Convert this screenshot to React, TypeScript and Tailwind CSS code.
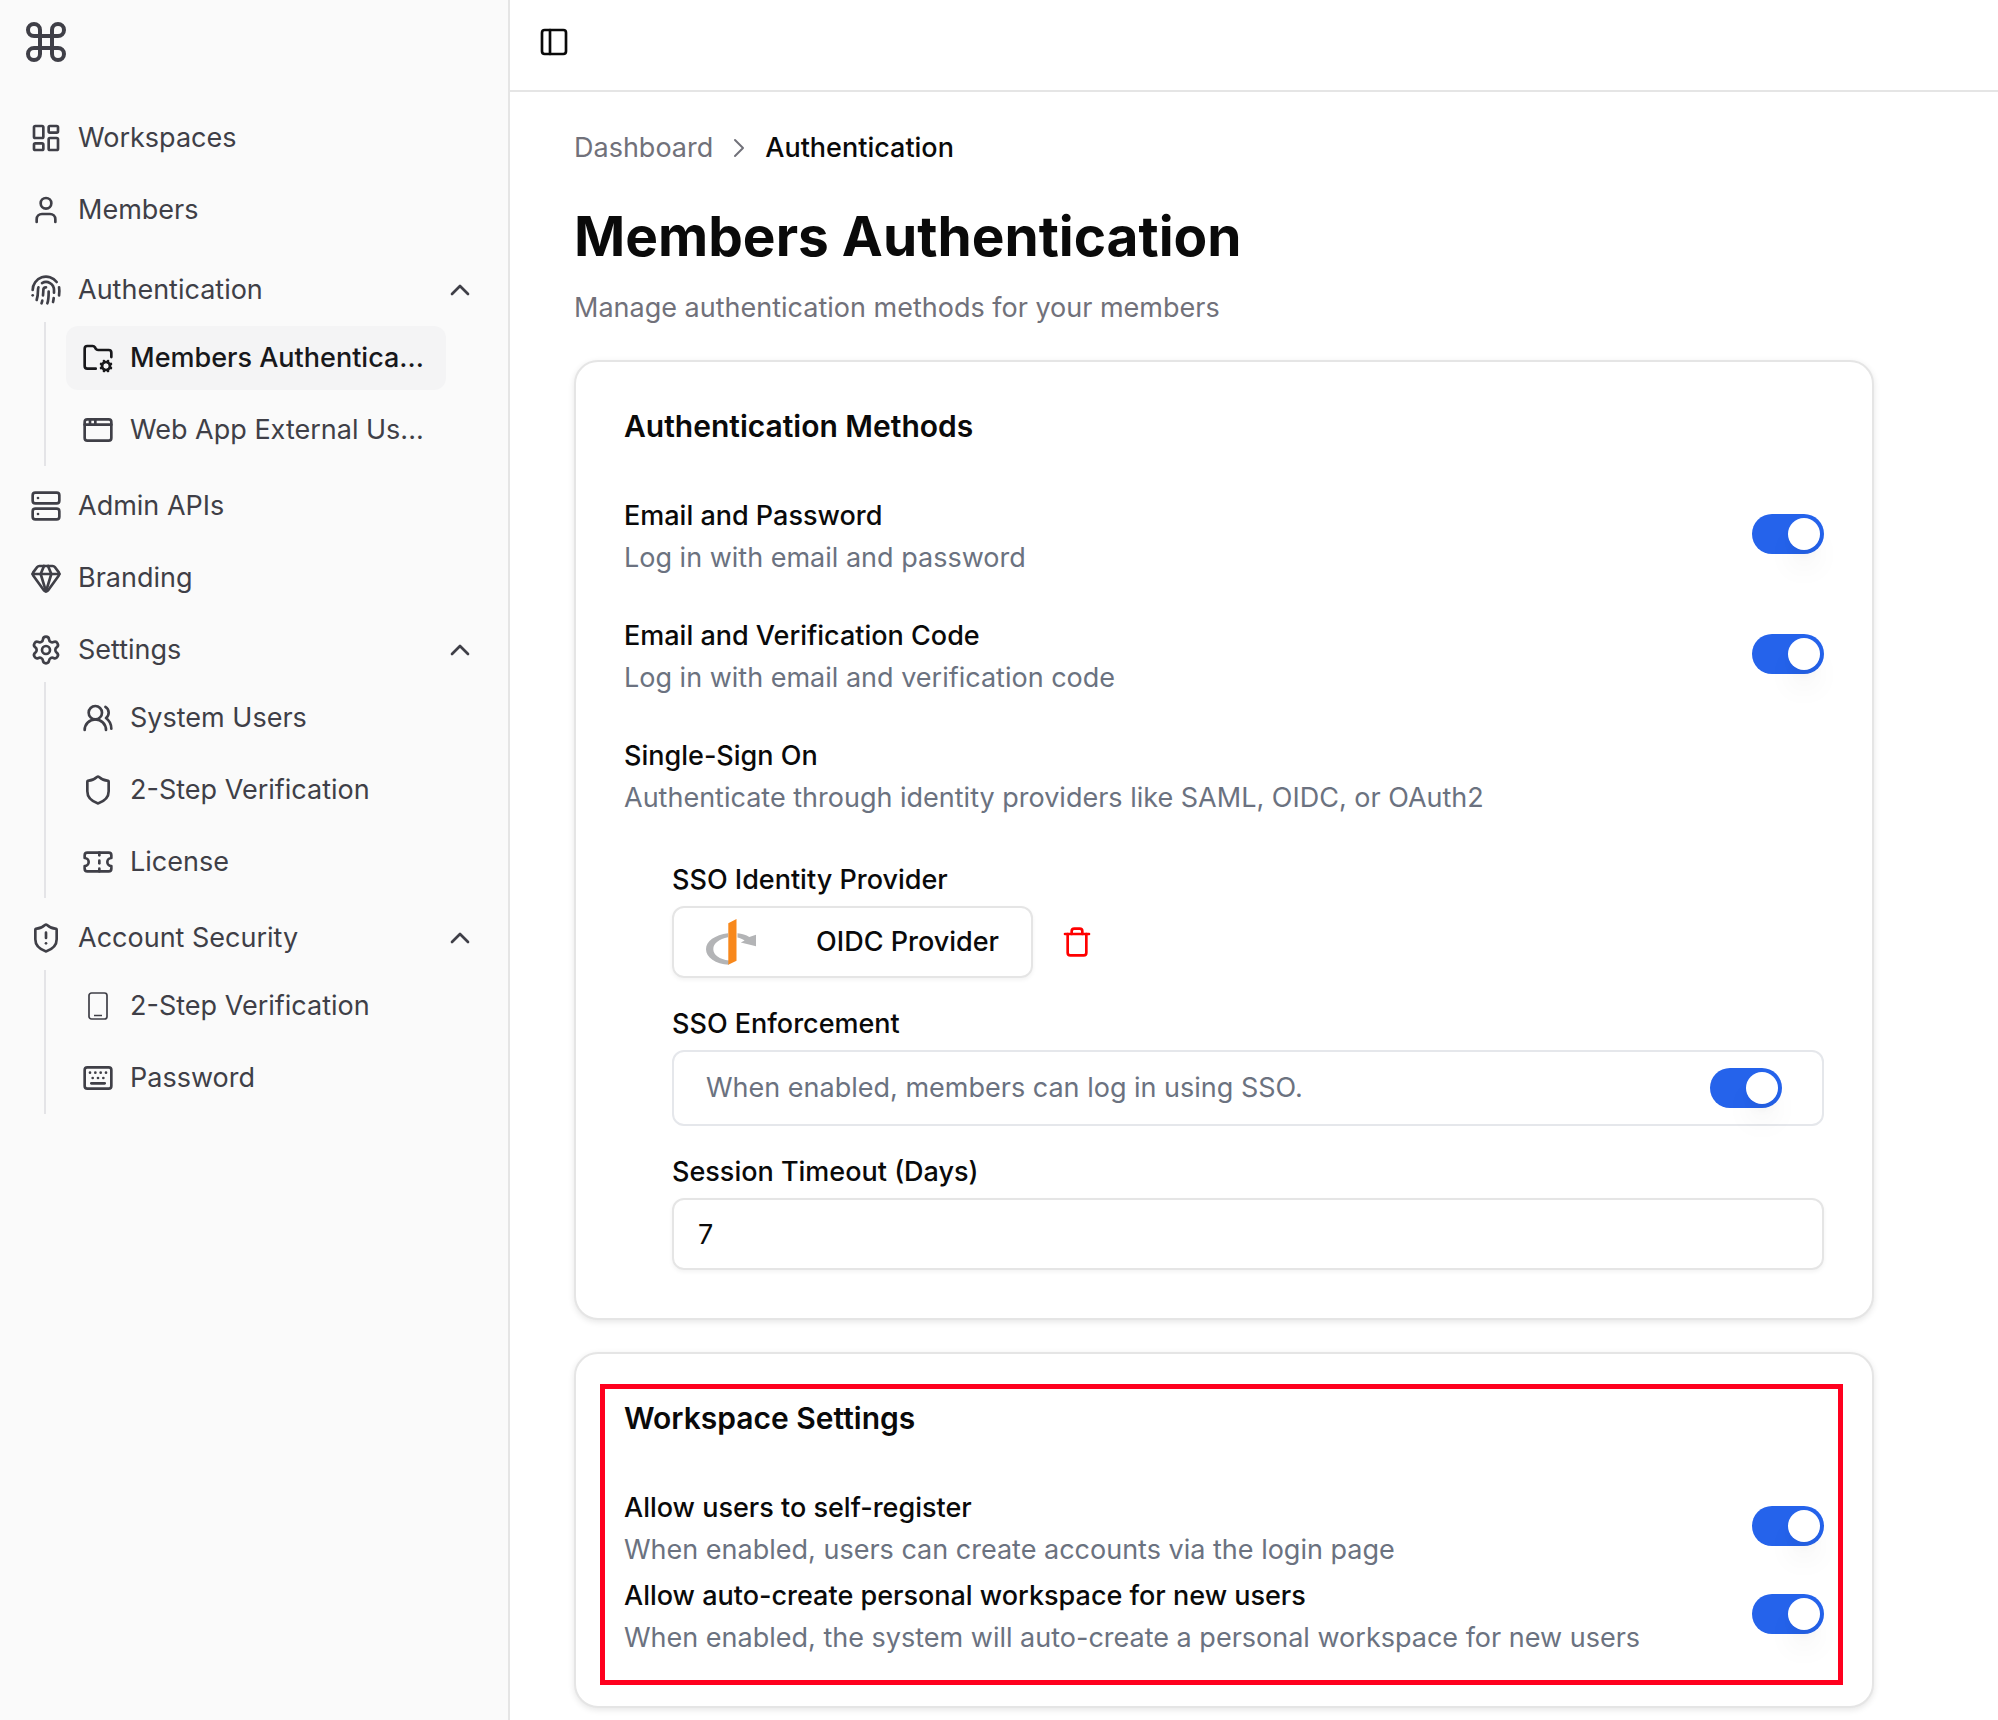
import { useState } from 'react';
import type { ComponentType, ReactNode } from 'react';
import {
  AppWindow,
  ChevronRight,
  ChevronUp,
  Command,
  Fingerprint,
  FolderCog,
  Gem,
  Keyboard,
  LayoutDashboard,
  PanelLeft,
  Server,
  Settings,
  Shield,
  ShieldAlert,
  Ticket,
  Trash,
  User,
  UsersRound,
} from 'lucide-react';

type Icon = ComponentType<{ className?: string }>;

interface NavEntry {
  label: string;
  icon: Icon;
  active?: boolean;
  spaced?: boolean;
  children?: NavEntry[];
}

function MobileIcon({ className }: { className?: string }) {
  return (
    <svg viewBox="0 0 32 32" fill="none" stroke="currentColor" className={className} aria-hidden="true">
      <rect x="7" y="3" width="18" height="26" rx="2.5" strokeWidth="1.7" />
      <path d="M12 25.5h8" strokeWidth="1.5" />
    </svg>
  );
}

function OpenIdLogo() {
  return (
    <svg viewBox="0 0 50 46" className="w-[50px] h-[46px]" aria-hidden="true">
      <path
        d="M22 14.2C9 15.8 0 22.2 0 30.2 0 38.4 9.5 44.8 23 45.8V41.6C13.500 40.3 7.3 36 7.3 30.3 7.3 24.4 13.2 19.9 22 18.3Z"
        fill="#b3b4b6"
      />
      <path
        d="M31.5 14.3C36 14.9 40 16.1 43.3 17.9L50 15.8V27.2L34.8 23.6 38.6 21.4C36.5 20.1 34.2 19.1 31.5 18.5Z"
        fill="#b3b4b6"
      />
      <path d="M22.3 4.2 30.5 0V41.8L22.3 45.8Z" fill="#f8881b" />
    </svg>
  );
}

const NAV: NavEntry[] = [
  { label: 'Workspaces', icon: LayoutDashboard },
  { label: 'Members', icon: User },
  {
    label: 'Authentication',
    icon: Fingerprint,
    spaced: true,
    children: [
      { label: 'Members Authentica...', icon: FolderCog, active: true },
      { label: 'Web App External Us...', icon: AppWindow },
    ],
  },
  { label: 'Admin APIs', icon: Server },
  { label: 'Branding', icon: Gem },
  {
    label: 'Settings',
    icon: Settings,
    children: [
      { label: 'System Users', icon: UsersRound },
      { label: '2-Step Verification', icon: Shield },
      { label: 'License', icon: Ticket },
    ],
  },
  {
    label: 'Account Security',
    icon: ShieldAlert,
    children: [
      { label: '2-Step Verification', icon: MobileIcon },
      { label: 'Password', icon: Keyboard },
    ],
  },
];

function NavLink({ item }: { item: NavEntry }) {
  const ItemIcon = item.icon;
  const tone = item.active ? 'bg-zinc-100 text-zinc-900 font-medium' : '';
  return (
    <a href="#" className={`flex h-16 items-center gap-4 rounded-xl px-4 ${tone}`}>
      <ItemIcon className="size-8 shrink-0" />
      <span className="whitespace-nowrap">{item.label}</span>
    </a>
  );
}

function NavGroup({ item }: { item: NavEntry }) {
  const [open, setOpen] = useState(true);
  const ItemIcon = item.icon;
  return (
    <div className={item.spaced ? 'mt-2' : ''}>
      <button
        type="button"
        aria-expanded={open}
        onClick={() => setOpen(!open)}
        className="flex h-16 w-full items-center gap-4 px-4 text-left"
      >
        <ItemIcon className="size-8 shrink-0" />
        <span className="flex-1">{item.label}</span>
        <ChevronUp className={`size-8 shrink-0 ${open ? '' : 'rotate-180'}`} />
      </button>
      {open && (
        <div className="ml-[30px] mr-[46px] flex flex-col gap-2 border-l-2 border-zinc-200 py-1 pl-5">
          {item.children?.map((child) => (
            <NavLink key={child.label} item={child} />
          ))}
        </div>
      )}
    </div>
  );
}

function Toggle({ id }: { id: string }) {
  const [on, setOn] = useState(true);
  return (
    <input
      id={id}
      type="checkbox"
      role="switch"
      checked={on}
      onChange={(e) => setOn(e.target.checked)}
      className="h-10 w-[72px] shrink-0 cursor-pointer appearance-none rounded-full bg-zinc-200 p-1 transition-colors before:block before:size-8 before:rounded-full before:bg-white before:shadow-[0_20px_30px_-6px_rgba(0,0,0,0.1),0_8px_12px_-4px_rgba(0,0,0,0.05)] before:transition-transform checked:bg-[#2563eb] checked:before:translate-x-8"
    />
  );
}

function SettingRow({ id, title, hint, toggle = true }: { id: string; title: string; hint: string; toggle?: boolean }) {
  return (
    <div className="flex items-center justify-between gap-8">
      <div className="flex flex-col gap-0.5 pt-1.5">
        {toggle ? (
          <label htmlFor={id} className="font-medium">{title}</label>
        ) : (
          <h3 className="font-medium">{title}</h3>
        )}
        <p className="text-[#6b7280]">{hint}</p>
      </div>
      {toggle && <Toggle id={id} />}
    </div>
  );
}

function Card({ title, children }: { title: string; children: ReactNode }) {
  return (
    <section className="relative rounded-3xl border-2 border-neutral-200 bg-white p-12 shadow-[0_2px_6px_rgba(0,0,0,0.1)]">
      <h2 className="mb-12 text-[30px] leading-8 font-semibold">{title}</h2>
      {children}
    </section>
  );
}

export default function App() {
  const [timeout, setTimeoutDays] = useState('7');

  return (
    <div className="flex min-h-screen bg-white font-[Inter,sans-serif] text-[27px] leading-10 text-neutral-950">
      <aside className="w-[510px] shrink-0 border-r-2 border-neutral-200 bg-neutral-50 text-zinc-700">
        <div className="px-[22px] pt-[18px] pb-10">
          <Command className="size-12" />
        </div>
        <nav className="flex flex-col gap-2 pr-4 pl-[14px]">
          {NAV.map((item) =>
            item.children ? <NavGroup key={item.label} item={item} /> : <NavLink key={item.label} item={item} />
          )}
        </nav>
      </aside>

      <div className="min-w-0 flex-1">
        <header className="flex h-[92px] items-center border-b-2 border-neutral-200 px-7 pb-1.5">
          <button type="button" aria-label="Toggle sidebar">
            <PanelLeft className="size-8" />
          </button>
        </header>

        <main className="pt-9 pr-[124px] pb-3 pl-16">
          <nav aria-label="Breadcrumb" className="flex items-center gap-2.5">
            <a href="#" className="text-[#71717a]">Dashboard</a>
            <ChevronRight className="size-8 text-[#71717a]" strokeWidth={1.5} />
            <span className="font-medium">Authentication</span>
          </nav>
          <h1 className="mt-8 text-[55px] leading-[72px] font-bold">Members Authentication</h1>
          <p className="mt-4 text-[#71717a]">Manage authentication methods for your members</p>

          <div className="mt-8 flex flex-col gap-8">
            <Card title="Authentication Methods">
              <div className="flex flex-col gap-8">
                <SettingRow id="email-password" title="Email and Password" hint="Log in with email and password" />
                <SettingRow id="email-code" title="Email and Verification Code" hint="Log in with email and verification code" />
                <SettingRow
                  id="sso"
                  title="Single-Sign On"
                  hint="Authenticate through identity providers like SAML, OIDC, or OAuth2"
                  toggle={false}
                />
              </div>

              <div className="mt-[42px] ml-12 flex flex-col gap-[26px]">
                <div className="flex flex-col gap-1.5">
                  <h4 className="font-medium">SSO Identity Provider</h4>
                  <div className="flex items-center gap-7">
                    <button
                      type="button"
                      className="flex h-[72px] w-[361px] items-center justify-between rounded-xl border-2 border-neutral-200 px-8 font-medium shadow-[0_2px_4px_rgba(0,0,0,0.05)]"
                    >
                      <OpenIdLogo />
                      OIDC Provider
                    </button>
                    <button type="button" aria-label="Remove provider" className="text-[#ff0000]">
                      <Trash className="size-8" />
                    </button>
                  </div>
                </div>

                <div className="flex flex-col gap-1.5">
                  <h4 className="font-medium">SSO Enforcement</h4>
                  <div className="flex h-[76px] items-center justify-between rounded-xl border-2 border-gray-200 pr-10 pl-8">
                    <label htmlFor="sso-enforcement" className="text-[#6b7280]">
                      When enabled, members can log in using SSO.
                    </label>
                    <Toggle id="sso-enforcement" />
                  </div>
                </div>

                <div className="flex flex-col gap-1.5">
                  <label htmlFor="session-timeout" className="font-medium">Session Timeout (Days)</label>
                  <input
                    id="session-timeout"
                    type="text"
                    inputMode="numeric"
                    value={timeout}
                    onChange={(e) => setTimeoutDays(e.target.value)}
                    className="h-[72px] w-full rounded-xl border-2 border-neutral-200 px-6 shadow-[0_2px_4px_rgba(0,0,0,0.05)]"
                  />
                </div>
              </div>
            </Card>

            <Card title="Workspace Settings">
              <SettingRow
                id="self-register"
                title="Allow users to self-register"
                hint="When enabled, users can create accounts via the login page"
              />
              <SettingRow
                id="auto-create"
                title="Allow auto-create personal workspace for new users"
                hint="When enabled, the system will auto-create a personal workspace for new users"
              />
              {/* highlight frame */}
              <div className="pointer-events-none absolute top-[30px] right-[29px] bottom-[21px] left-6 border-[5px] border-[#ff001e]" />
            </Card>
          </div>
        </main>
      </div>
    </div>
  );
}
